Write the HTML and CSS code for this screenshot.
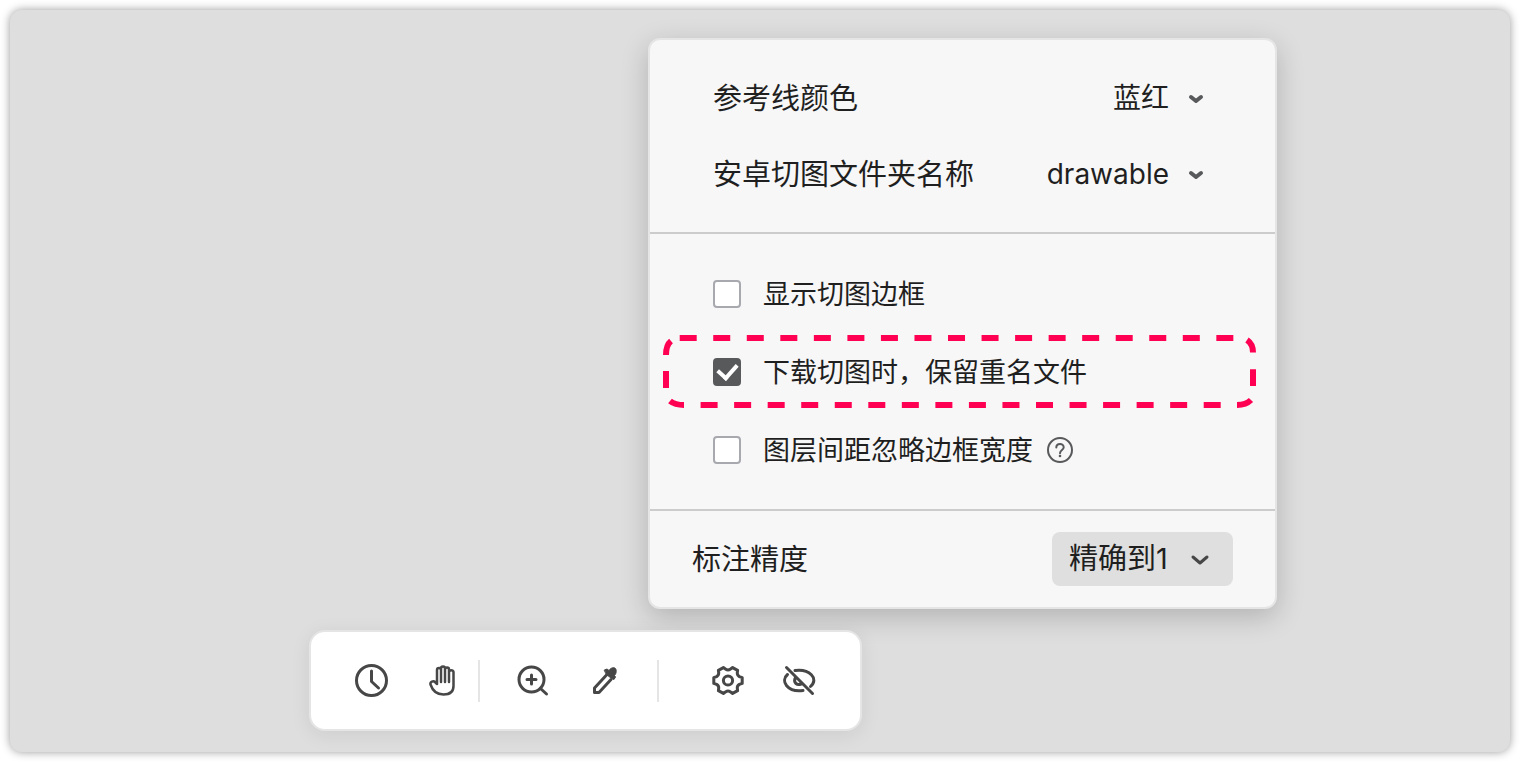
FILE: index.html
```html
<!DOCTYPE html>
<html lang="zh-CN">
<head>
    <meta charset="UTF-8">
    <meta name="viewport" content="width=device-width, initial-scale=1.0">
    <title>标注设置</title>
    <link rel="stylesheet" href="styles.css">
</head>
<body>
    <main class="stage">
        <div class="workspace">
            <form class="panel">
                <section class="section selects">
                    <div class="row">
                        <label for="guideColor">参考线颜色</label>
                        <div class="picker">
                            <select id="guideColor">
                                <option>蓝红</option>
                            </select>
                            <svg class="arrow" viewBox="0 0 16 12"><path d="M3 5L8 9L13 5"/></svg>
                        </div>
                    </div>
                    <div class="row">
                        <label for="folderName">安卓切图文件夹名称</label>
                        <div class="picker">
                            <select id="folderName">
                                <option>drawable</option>
                            </select>
                            <svg class="arrow" viewBox="0 0 16 12"><path d="M3 5L8 9L13 5"/></svg>
                        </div>
                    </div>
                </section>

                <section class="section checks">
                    <div class="check-row">
                        <input type="checkbox" id="showBorder">
                        <label for="showBorder">显示切图边框</label>
                    </div>
                    <div class="check-row">
                        <input type="checkbox" id="keepNames" checked>
                        <label for="keepNames">下载切图时，保留重名文件</label>
                        <svg class="highlight" viewBox="0 0 593 73">
                            <path class="dashes" d="M16.7 3H571"/>
                            <path d="M584 5Q590 9 590 17.5M590 34.3V51M588 65Q583 70 574 70"/>
                            <path class="dashes" d="M557.7 70H37"/>
                            <path d="M21 70Q12 70 7 66M3 53V36M3 20Q3 10 8 6"/>
                        </svg>
                    </div>
                    <div class="check-row">
                        <input type="checkbox" id="ignoreBorder">
                        <label for="ignoreBorder">图层间距忽略边框宽度</label>
                        <button type="button" class="help" aria-label="帮助">
                            <svg viewBox="0 0 26 26">
                                <circle cx="13" cy="13" r="12"/>
                                <path d="M9.3 10.5C9.3 5.8 16.7 5.8 16.7 10.3C16.7 13 13 13 13 16.2"/>
                                <circle class="dot" cx="13" cy="19" r="1.3"/>
                            </svg>
                        </button>
                    </div>
                </section>

                <section class="section precision">
                    <label for="precision">标注精度</label>
                    <div class="picker filled">
                        <select id="precision">
                            <option>精确到1</option>
                        </select>
                        <svg class="arrow" viewBox="0 0 20 14"><path d="M3 5L10 11L17 5"/></svg>
                    </div>
                </section>
            </form>

            <nav class="toolbar">
                <div class="tools">
                    <button type="button" aria-label="历史">
                        <svg viewBox="0 0 36 36">
                            <circle cx="18.5" cy="17.5" r="15"/>
                            <path d="M18.5 8V18.5L25.5 25"/>
                        </svg>
                    </button>
                    <button type="button" aria-label="拖动">
                        <svg viewBox="0 0 36 36" class="fine">
                            <path d="M13 21V7a2 2 0 0 1 4 0V19M17 7V5.5a2 2 0 0 1 4 0V19M21 6.5a2 2 0 0 1 4 0V19M25 9a2.3 2.3 0 0 1 4.5 0V23C29.5 29 25.5 31.5 19.5 31.5C11.5 31.5 8 26 6.5 21.5C5.8 18.5 9.5 17.5 11 19L13 21"/>
                        </svg>
                    </button>
                </div>
                <div class="tools zoom-tools">
                    <button type="button" aria-label="放大">
                        <svg viewBox="0 0 36 36">
                            <circle cx="16.5" cy="16.5" r="12.5"/>
                            <path d="M16.5 12V21M12 16.5H21M25.5 25.5L31.5 31"/>
                        </svg>
                    </button>
                    <button type="button" aria-label="取色">
                        <svg viewBox="0 0 36 36">
                            <path d="M20.5 12L8.5 25V29.5H13L25 16.5"/>
                            <path class="solid" d="M18.5 7L21 6L23 7.5C25 4 29.5 4 30 6.5C30.5 9 30 11 28.5 12.5L29.5 14L28 16.5L25.5 15.5L20.5 11.5Z"/>
                        </svg>
                    </button>
                </div>
                <div class="tools view-tools">
                    <button type="button" aria-label="设置">
                        <svg viewBox="0 0 36 36">
                            <path d="M32.2 14.6V20.4L29.4 21.4Q27 22.8 27.3 25.2L27.6 27.6L22.6 30.4L20.2 28.8Q18 27.4 15.8 28.8L13.4 30.4L8.4 27.6L8.7 25.2Q9 22.8 6.6 21.4L3.8 20.4V14.6L6.6 13.6Q9 12.2 8.7 9.8L8.4 7.4L13.4 4.6L15.8 6.2Q18 7.6 20.2 6.2L22.6 4.6L27.6 7.4L27.3 9.8Q27 12.2 29.4 13.6Z"/>
                            <circle cx="18" cy="17.5" r="4.6"/>
                        </svg>
                    </button>
                    <button type="button" aria-label="隐藏标注">
                        <svg viewBox="0 0 36 36">
                            <path d="M6.5 11.5C-1 18 6.5 29.5 22 27.5M14 7.5C28 5.5 38.5 15.5 29.5 23.5M5.5 4.5L31.5 30.5M14 15.5C12.5 20 16 22.5 20 21"/>
                        </svg>
                    </button>
                </div>
            </nav>
        </div>
    </main>
</body>
</html>
```
FILE: styles.css
```css
* {
    box-sizing: border-box;
}

body {
    margin: 0;
    padding: 10px;
    background-color: #ffffff;
    color: #1f1f1f;
    font-family: Inter, 'Noto Sans CJK SC', sans-serif;
    font-size: 29px;
    line-height: 40px;
}

.stage {
    display: grid;
    grid-template-columns: minmax(0, 299fr) minmax(0, 968px) minmax(0, 233fr);
    align-items: start;
    min-height: calc(100vh - 20px);
    padding-top: 28px;
    background-color: #dedede;
    border-radius: 12px;
    box-shadow: 0 0 10px rgba(0, 0, 0, 0.4);
}

.workspace {
    grid-column: 2;
    display: flex;
    flex-direction: column;
    gap: 21px;
}

.panel {
    align-self: flex-end;
    width: 100%;
    max-width: 629px;
    background-color: #f7f7f7;
    border: 2px solid #e5e5e5;
    border-radius: 12px;
    box-shadow: 0 8px 28px rgba(0, 0, 0, 0.2);
}

.section + .section {
    border-top: 2px solid #cccccc;
}

.selects {
    padding: 20px 71px 20px 63px;
}

.row,
.precision {
    display: flex;
    align-items: center;
    justify-content: space-between;
}

.row {
    height: 76px;
}

label {
    padding-top: 2px;
}

.picker {
    position: relative;
    display: flex;
    align-items: center;
}

.picker select {
    appearance: none;
    padding: 0 35px 0 0;
    border: 0;
    background: none;
    color: inherit;
    font: inherit;
    font-size: 28px;
    line-height: 40px;
    text-align-last: right;
    cursor: pointer;
}

.arrow {
    position: absolute;
    right: 0;
    width: 16px;
    height: 12px;
    fill: none;
    stroke: #58595b;
    stroke-width: 4;
    stroke-linecap: round;
    stroke-linejoin: round;
    pointer-events: none;
}

.checks {
    padding: 21px 18px 20px 14px;
}

.check-row {
    position: relative;
    display: flex;
    align-items: center;
    height: 78px;
    padding-left: 49px;
    font-size: 27px;
}

.check-row input {
    appearance: none;
    display: grid;
    place-items: center;
    width: 28px;
    height: 28px;
    margin: 0 22px 0 0;
    background-color: #ffffff;
    border: 2px solid #a7a9ae;
    border-radius: 4px;
}

.check-row input:checked {
    background-color: #58595b;
    border-color: #58595b;
}

.check-row input:checked::before {
    content: "";
    width: 9px;
    height: 15px;
    margin-bottom: 6px;
    border: solid #ffffff;
    border-width: 0 4px 4px 0;
    transform: rotate(42deg);
}

.highlight {
    position: absolute;
    top: 2px;
    left: -1px;
    width: 100%;
    height: auto;
    fill: none;
    stroke: #ff0052;
    stroke-width: 6;
    pointer-events: none;
}

.highlight .dashes {
    stroke-dasharray: 17 16.54;
}

button {
    padding: 0;
    border: 0;
    background: none;
    cursor: pointer;
}

button svg {
    display: block;
    fill: none;
    stroke: #474747;
    stroke-linecap: round;
    stroke-linejoin: round;
}

.help {
    margin-left: 14px;
}

.help svg {
    width: 26px;
    height: 26px;
    stroke: #58595b;
    stroke-width: 2;
}

.help .dot {
    fill: #58595b;
    stroke: none;
}

.precision {
    padding: 21px 42px;
}

.filled {
    width: 181px;
    height: 54px;
    background-color: #dfdfdf;
    border-radius: 8px;
}

.filled select {
    width: 100%;
    height: 100%;
    padding: 0 0 0 17px;
    font-size: 29px;
    text-align-last: left;
}

.filled .arrow {
    right: 23px;
    width: 20px;
    height: 14px;
    stroke: #474747;
    stroke-width: 3;
}

.toolbar {
    display: flex;
    align-items: center;
    width: 100%;
    max-width: 553px;
    height: 101px;
    padding: 0 42px;
    background-color: #ffffff;
    border: 2px solid #e5e5e5;
    border-radius: 16px;
    box-shadow: 0 4px 20px rgba(0, 0, 0, 0.08);
}

.tools {
    display: flex;
    align-items: center;
    gap: 35px;
    height: 42px;
}

.tools svg {
    width: 36px;
    height: 36px;
    stroke-width: 3;
}

.tools .fine {
    stroke-width: 2.5;
}

.tools .solid {
    fill: #474747;
    stroke-width: 1;
}

.zoom-tools {
    margin-left: 18px;
    padding: 0 35px;
    border-left: 2px solid #e5e5e5;
}

.view-tools {
    padding-left: 51px;
    border-left: 2px solid #e5e5e5;
}
```
